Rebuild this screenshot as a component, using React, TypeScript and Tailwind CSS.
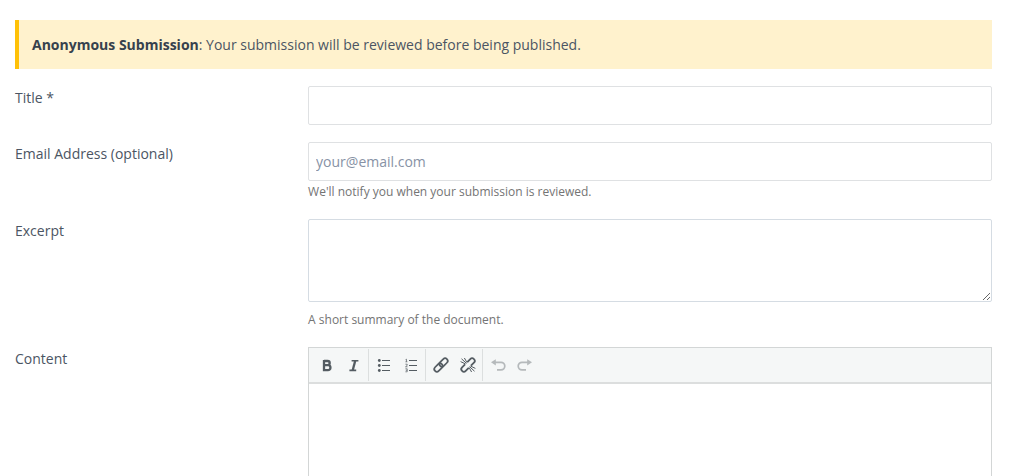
import type { ReactNode } from 'react'

const rowClass = 'grid grid-cols-[30%_70%] items-start'
const labelClass = 'text-[14px] leading-6'
const helpClass = 'text-[12px] leading-5 text-[#747474]'

function BoldIcon() {
  return (
    <svg width="18" height="18" viewBox="0 0 18 18" fill="none" stroke="currentColor" strokeWidth="2.3">
      <path d="M6 5h3.6a2 2 0 0 1 0 4.2H6m0 0h4a2.4 2.4 0 0 1 0 4.9H6z M6 4v11" />
    </svg>
  )
}

function ItalicIcon() {
  return (
    <svg width="18" height="18" viewBox="0 0 18 18" fill="none" stroke="currentColor">
      <path strokeWidth="1.6" d="M6.6 4.8h6.8M4.4 14.4h6.8" />
      <path strokeWidth="2.3" d="M10.2 4.8 7.7 14.4" />
    </svg>
  )
}

function BulletListIcon() {
  return (
    <svg width="18" height="18" viewBox="0 0 18 18" fill="currentColor">
      <path d="M7 4h8v1H7zM7 9h8v1H7zM7 14h8v1H7z" />
      <circle cx="4.3" cy="4.5" r="1.4" />
      <circle cx="4.3" cy="9.5" r="1.4" />
      <circle cx="4.3" cy="14.5" r="1.4" />
    </svg>
  )
}

function NumberedListIcon() {
  return (
    <svg width="18" height="18" viewBox="0 0 18 18" fill="none" stroke="currentColor">
      <path d="M7 4.5h8M7 9.5h8M7 14.5h8" />
      <path strokeWidth=".7" d="M3.5 3.7l1-.5v2.6M3.4 5.8h2M3.4 8.2h1.8v1.2L3.5 10.8h2M3.4 12.8h1.8v3H3.4M3.8 14.3h1.4" />
    </svg>
  )
}

function LinkIcon() {
  return (
    <svg width="18" height="18" viewBox="0 0 18 18" fill="none" stroke="currentColor" strokeWidth="1.7">
      <g transform="rotate(-45 9 9)">
        <rect x="0.6" y="6.4" width="9.6" height="5.2" rx="2.6" />
        <rect x="7.8" y="6.4" width="9.6" height="5.2" rx="2.6" />
      </g>
    </svg>
  )
}

function UnlinkIcon() {
  return (
    <svg width="18" height="18" viewBox="0 0 18 18" fill="none" stroke="currentColor">
      <g transform="rotate(-45 9 9)" strokeWidth="1.8">
        <path d="M7.4 6.4H3.2a2.6 2.6 0 0 0 0 5.2h4.2" />
        <path d="M10.6 6.4h4.2a2.6 2.6 0 0 1 0 5.2h-4.2" />
      </g>
      <path strokeWidth="1" d="M2.5 2.8l5 4.6M5.4 2l2.6 4.6M1.6 5.6l5 2.4M15.5 15.2l-5-4.6M12.6 16 10 11.4M16.4 12.4l-5-2.4" />
    </svg>
  )
}

function UndoIcon() {
  return (
    <svg width="18" height="18" viewBox="0 0 18 18" fill="none" stroke="currentColor" strokeWidth="1.7">
      <path d="M5 6.3h7a3.8 3.8 0 0 1 0 7.6H8" />
      <path fill="currentColor" stroke="none" d="M2 6.3l4.8-3.1v6.2z" />
    </svg>
  )
}

function RedoIcon() {
  return (
    <svg width="18" height="18" viewBox="0 0 18 18" fill="none" stroke="currentColor" strokeWidth="1.7">
      <path d="M13 6.3H6a3.8 3.8 0 0 0 0 7.6h4" />
      <path fill="currentColor" stroke="none" d="M16 6.3l-4.8-3.1v6.2z" />
    </svg>
  )
}

function Tool({ name, disabled, children }: { name: string; disabled?: boolean; children: ReactNode }) {
  return (
    <button
      type="button"
      aria-label={name}
      disabled={disabled}
      className="flex h-8 w-[27px] items-center justify-center text-[#545c62] disabled:text-[#b5b9bb]"
    >
      {children}
    </button>
  )
}

function Divider() {
  return <span className="mx-px h-8 w-px bg-[#dcdfdf]" />
}

export default function App() {
  return (
    <main className="pt-5 pr-8 pl-[15px] font-['Open_Sans','Noto_Sans',sans-serif] text-[#4b5563]">
      <div className="mb-[17px] border-l-4 border-[#ffc107] bg-[#fff2cd] px-[13px] py-3 text-[14px] leading-[25px]">
        <strong className="font-bold text-[#36414d]">Anonymous Submission</strong>: Your submission will be reviewed before being published.
      </div>

      <form className="flex flex-col gap-[17px]">
        <div className={rowClass}>
          <label htmlFor="title" className={labelClass}>Title *</label>
          <input id="title" type="text" required className="h-[39px] w-full rounded-xs border border-[#dfe1e3] px-[7px] text-[14px] shadow-none outline-none" />
        </div>

        <div className={rowClass}>
          <label htmlFor="email" className={labelClass}>Email Address (optional)</label>
          <div>
            <input id="email" type="email" placeholder="your@email.com" className="block h-[39px] w-full rounded-xs border border-[#dfe1e3] px-[7px] text-[14px] outline-none placeholder:text-[#8792a5]" />
            <p className={helpClass + ' pt-px'}>We'll notify you when your submission is reviewed.</p>
          </div>
        </div>

        <div className={rowClass}>
          <label htmlFor="excerpt" className={labelClass}>Excerpt</label>
          <div>
            <textarea id="excerpt" rows={3} className="block h-[83px] w-full resize rounded-xs border border-[#d5dce3] px-[7px] py-1.5 text-[14px] outline-none" />
            <p className={helpClass + ' mt-2'}>A short summary of the document.</p>
          </div>
        </div>

        <div className={rowClass}>
          <label htmlFor="content" className={labelClass}>Content</label>
          <div className="border border-[#d3d6d6]">
            <div role="toolbar" aria-label="Formatting" className="flex items-center border-b-2 border-[#dcdede] bg-[#f5f7f7] px-1 py-px">
              <Tool name="Bold"><BoldIcon /></Tool>
              <Tool name="Italic"><ItalicIcon /></Tool>
              <Divider />
              <Tool name="Bulleted list"><BulletListIcon /></Tool>
              <Tool name="Numbered list"><NumberedListIcon /></Tool>
              <Divider />
              <Tool name="Link"><LinkIcon /></Tool>
              <Tool name="Unlink"><UnlinkIcon /></Tool>
              <Divider />
              <Tool name="Undo" disabled><UndoIcon /></Tool>
              <Tool name="Redo" disabled><RedoIcon /></Tool>
            </div>
            <textarea id="content" rows={5} className="block w-full resize-none p-2 text-[14px] outline-none" />
          </div>
        </div>
      </form>
    </main>
  )
}
